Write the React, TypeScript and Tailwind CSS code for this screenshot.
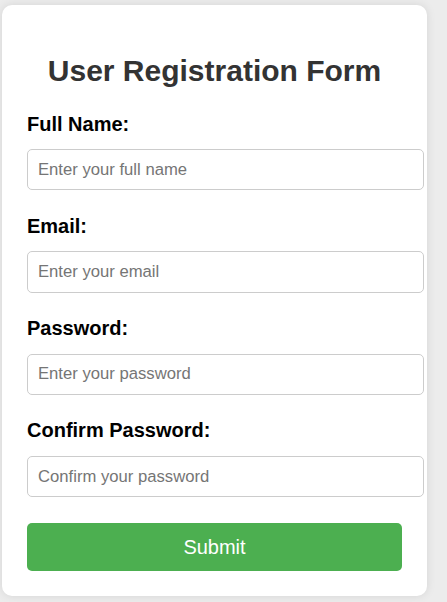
const fields = [
  { label: 'Full Name:', type: 'text', placeholder: 'Enter your full name' },
  { label: 'Email:', type: 'email', placeholder: 'Enter your email' },
  { label: 'Password:', type: 'password', placeholder: 'Enter your password' },
  { label: 'Confirm Password:', type: 'password', placeholder: 'Confirm your password' },
]

export default function App() {
  return (
    <div className="min-h-screen bg-[#ececec] pt-[5px] pl-[2px] font-['Liberation_Sans',Arial,sans-serif]">
      <div className="w-[425px] rounded-[10px] bg-white px-[25px] pt-[49px] pb-[25px] shadow-[0_0_10px_rgba(0,0,0,0.1)]">
        <h2 className="text-center text-[30px] leading-[34px] font-bold text-[#333]">
          User Registration Form
        </h2>
        <form className="mt-[24.5px] flex flex-col" onSubmit={(e) => e.preventDefault()}>
          {fields.map((f) => (
            <div key={f.label} className="mb-[24.4px]">
              <label className="block text-[20px] leading-[23px] font-bold text-black">
                {f.label}
              </label>
              <input
                type={f.type}
                placeholder={f.placeholder}
                className="mt-[13.5px] box-border h-[41.4px] w-[397px] rounded-[5px] border border-[#ccc] px-[10px] text-[16.67px] text-black placeholder:text-[#757575] outline-none"
              />
            </div>
          ))}
          <button
            type="submit"
            className="mt-[1.2px] h-[48px] w-full rounded-[5px] bg-[#4caf50] text-[20px] text-white"
          >
            Submit
          </button>
        </form>
      </div>
    </div>
  )
}
